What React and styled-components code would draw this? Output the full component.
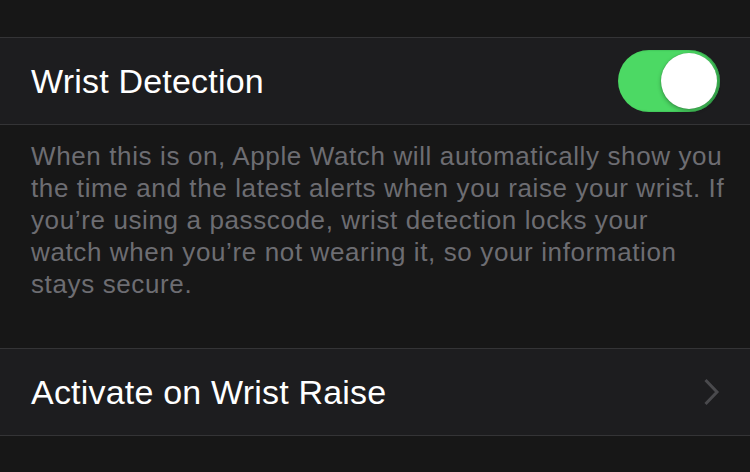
// Imports
import React from 'react';
import styled, { createGlobalStyle } from 'styled-components';

// Global
const GlobalStyle = createGlobalStyle`
	html, body{
		margin: 0;
		padding: 0;
		background-color: #171717;
	}
	body{
		font-family: "Liberation Sans", Arial, sans-serif;
		-webkit-font-smoothing: antialiased;
	}
`;

// Texte du pied de groupe
const FOOTER_LINES = [
	'When this is on, Apple Watch will automatically show you',
	'the time and the latest alerts when you raise your wrist. If',
	'you\u2019re using a passcode, wrist detection locks your',
	'watch when you\u2019re not wearing it, so your information',
	'stays secure.',
];

// Composants
const Toggle = ({ on }) => (
	<Switch $on={ on } role="switch" aria-checked={ on }>
		<Knob $on={ on }/>
	</Switch>
);

const Chevron = () => (
	<svg width="17" height="28" viewBox="0 0 17 28" fill="none">
		<path d="M2.5 2 L14 14 L2.5 26" stroke="#4a4a4d" strokeWidth="3" strokeLinecap="butt" strokeLinejoin="miter"/>
	</svg>
);

const App = () => {
	return(
		<Page>
			<GlobalStyle/>

			{/* Groupe 1 */}
			<Group>
				<Row>
					<Label>Wrist Detection</Label>
					<Toggle on/>
				</Row>
			</Group>
			<Footer>
				{ FOOTER_LINES.map((line) => <span key={ line }>{ line }</span>) }
			</Footer>
			{/* Groupe 1 */}

			{/* Groupe 2 */}
			<Group>
				<Row>
					<Label>Activate on Wrist Raise</Label>
					<Chevron/>
				</Row>
			</Group>
			{/* Groupe 2 */}

		</Page>
	);
};

// Styled
const Page = styled.div`
	width: 750px;
	height: 472px;
	overflow: hidden;
	padding-top: 37px;
	box-sizing: border-box;
	background-color: #171717;
`;

const Group = styled.div`
	border-top: 1px solid #343436;
	border-bottom: 1px solid #343436;
	background-color: #1d1d1f;
`;

const Row = styled.div`
	display: flex;
	align-items: center;
	justify-content: space-between;
	height: 86px;
	padding: 0 30px 0 31px;
`;

const Label = styled.div`
	font-size: 34px;
	line-height: 34px;
	color: #ffffff;
	letter-spacing: 0.2px;
`;

const Switch = styled.div`
	position: relative;
	width: 102px;
	height: 62px;
	border-radius: 31px;
	background-color: ${ ({ $on }) => $on ? '#4cd964' : '#3a3a3c' };
	box-shadow: inset -2px 0 2px rgba(30, 110, 50, 0.5);
`;

const Knob = styled.div`
	position: absolute;
	top: 3px;
	left: ${ ({ $on }) => $on ? '43px' : '3px' };
	width: 56px;
	height: 56px;
	border-radius: 50%;
	background-color: #ffffff;
	box-shadow: 0 2px 4px rgba(0, 0, 0, 0.3), 0 0 1px rgba(0, 0, 0, 0.3);
`;

const Footer = styled.div`
	display: flex;
	flex-direction: column;
	height: 223px;
	box-sizing: border-box;
	padding: 15px 0 0 31px;
	font-size: 26px;
	line-height: 32px;
	letter-spacing: 0.62px;
	color: #6d6d72;
	white-space: nowrap;
	span{
		display: block;
	}
`;

// Export
export default App;
